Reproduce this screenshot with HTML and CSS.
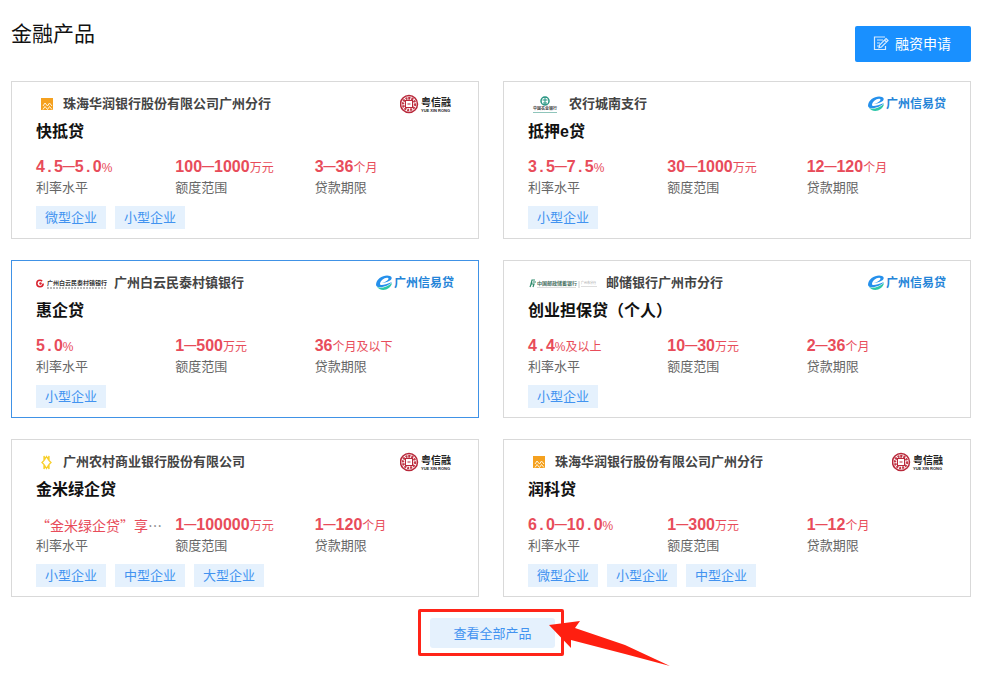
FILE: index.html
```html
<!DOCTYPE html>
<html lang="zh-CN">

<head>
    <meta charset="UTF-8">
    <meta name="viewport" content="width=device-width, initial-scale=1.0">
    <title>金融产品</title>
    <link rel="stylesheet" href="styles.css">
</head>

<body>
    <!-- Shared logos -->
    <svg class="sprite" aria-hidden="true">
        <symbol id="crbank" viewBox="0 0 21 22">
            <rect x="5" y="5" width="12" height="12" fill="#f5a11f" />
            <path d="M7 13l2-3 2.500 3 2-3 2.500 3M7 16.500l2-3 2.500 3 2-3 2.500 3" fill="none" stroke="#fff3da" />
        </symbol>
        <symbol id="yxr" viewBox="0 0 54 22">
            <circle cx="9" cy="11" r="8.500" fill="#fff" stroke="#b8283a" stroke-width="1.500" />
            <circle cx="9" cy="11" r="6" fill="none" stroke="#c23a49" stroke-width="2.500" stroke-dasharray="2 1" />
            <rect x="5.500" y="7.500" width="7" height="7" fill="#fff" stroke="#b8283a" />
            <path d="M5 7.500h8M9 4v3M7.500 11h3" stroke="#b8283a" />
            <text x="21" y="13" class="logo-brush">粤信融</text>
            <text x="21" y="19" class="logo-pinyin">YUE XIN RONG</text>
        </symbol>
        <symbol id="xyd" viewBox="0 0 78 22">
            <path d="M0 13C0 6 9 2 14 4c4 2 1 6-8 7 4-1 8-4 6-5-3-1-8 3-8 6 0 2 5 1 12-2-3 4-15 8-16 3z" fill="#2590ec" />
            <path d="M1 15c4 2 10 0 15-4-1 6-10 10-15 4z" fill="#2bc6a8" />
            <text x="18" y="15" class="logo-xyd">广州信易贷</text>
        </symbol>
    </svg>

    <div class="page">
        <header class="page-header">
            <h1>金融产品</h1>
            <button type="button" class="apply-button">
                <svg width="16" height="16" viewBox="0 0 16 16" fill="none" stroke="#d5eaff" stroke-width="1.200">
                    <path d="M12 2H1.500v12.500H12.500V11M4 5h6M4 8h3M4 11h2" />
                    <path d="M13 3.500l2 2-6.500 6.500-2.500.7.600-2.700zM11.500 5l2 2" />
                </svg>
                融资申请
            </button>
        </header>

        <main class="product-grid">
            <article class="card">
                <div class="bank">
                    <svg width="21" height="22"><use href="#crbank" /></svg>
                    <span class="bank-name">珠海华润银行股份有限公司广州分行</span>
                    <svg class="platform" width="54" height="22"><use href="#yxr" /></svg>
                </div>
                <h2>快抵贷</h2>
                <dl class="stats">
                    <div><dd><b>4<i class="dot">.</i>5<i class="dash">—</i>5<i class="dot">.</i>0</b>%</dd><dt>利率水平</dt></div>
                    <div><dd><b>100<i class="dash">—</i>1000</b>万元</dd><dt>额度范围</dt></div>
                    <div><dd><b>3<i class="dash">—</i>36</b>个月</dd><dt>贷款期限</dt></div>
                </dl>
                <div class="tags"><span>微型企业</span><span>小型企业</span></div>
            </article>

            <article class="card">
                <div class="bank">
                    <svg width="35" height="22" viewBox="0 0 35 22">
                        <circle cx="17" cy="8" r="4" fill="none" stroke="#279582" stroke-width="1.500" />
                        <path d="M17 4v8M14.500 7h5M15 10h4" stroke="#279582" />
                        <text x="5" y="17" class="logo-abc">中国农业银行</text>
                        <path d="M5 19.500h24" stroke="#8fc5bb" />
                    </svg>
                    <span class="bank-name">农行城南支行</span>
                    <svg class="platform" width="78" height="22"><use href="#xyd" /></svg>
                </div>
                <h2>抵押e贷</h2>
                <dl class="stats">
                    <div><dd><b>3<i class="dot">.</i>5<i class="dash">—</i>7<i class="dot">.</i>5</b>%</dd><dt>利率水平</dt></div>
                    <div><dd><b>30<i class="dash">—</i>1000</b>万元</dd><dt>额度范围</dt></div>
                    <div><dd><b>12<i class="dash">—</i>120</b>个月</dd><dt>贷款期限</dt></div>
                </dl>
                <div class="tags"><span>小型企业</span></div>
            </article>

            <article class="card active">
                <div class="bank">
                    <svg width="72" height="22" viewBox="0 0 72 22">
                        <circle cx="4" cy="11.500" r="3.200" fill="none" stroke="#d9212d" stroke-width="1.500" stroke-dasharray="17 3" />
                        <circle cx="4.500" cy="11.500" r="1.200" fill="#d9212d" />
                        <text x="11" y="13" class="logo-mintai">广州白云民泰村镇银行</text>
                        <path d="M11 16h60" stroke="#777" stroke-dasharray="2 1" />
                    </svg>
                    <span class="bank-name">广州白云民泰村镇银行</span>
                    <svg class="platform" width="78" height="22"><use href="#xyd" /></svg>
                </div>
                <h2>惠企贷</h2>
                <dl class="stats">
                    <div><dd><b>5<i class="dot">.</i>0</b>%</dd><dt>利率水平</dt></div>
                    <div><dd><b>1<i class="dash">—</i>500</b>万元</dd><dt>额度范围</dt></div>
                    <div><dd><b>36</b>个月及以下</dd><dt>贷款期限</dt></div>
                </dl>
                <div class="tags"><span>小型企业</span></div>
            </article>

            <article class="card">
                <div class="bank">
                    <svg width="72" height="22" viewBox="0 0 72 22">
                        <path d="M7 8H4L3 12h3l-1 3M2 15l2-5M5 10h3" fill="none" stroke="#2f8b6c" stroke-width="1.200" />
                        <text x="9" y="13" class="logo-psbc">中国邮政储蓄银行</text>
                        <path d="M9 15.500h39M53 14.500h16" stroke="#ddd" />
                        <path d="M51 9v7" stroke="#ccc" />
                        <text x="53" y="12" class="logo-branch">广州市分行</text>
                    </svg>
                    <span class="bank-name">邮储银行广州市分行</span>
                    <svg class="platform" width="78" height="22"><use href="#xyd" /></svg>
                </div>
                <h2>创业担保贷（个人）</h2>
                <dl class="stats">
                    <div><dd><b>4<i class="dot">.</i>4</b>%及以上</dd><dt>利率水平</dt></div>
                    <div><dd><b>10<i class="dash">—</i>30</b>万元</dd><dt>额度范围</dt></div>
                    <div><dd><b>2<i class="dash">—</i>36</b>个月</dd><dt>贷款期限</dt></div>
                </dl>
                <div class="tags"><span>小型企业</span></div>
            </article>

            <article class="card">
                <div class="bank">
                    <svg width="21" height="22" viewBox="0 0 21 22">
                        <path d="M8 5l1 3 1.500-2.500L12 8l1-3v4.500l2 2-2 2V18l-1-3-1.500 2.500L9 15l-1 3v-4.500l-2-2 2-2z" fill="none" stroke="#f8d02c" stroke-width="1.300" />
                    </svg>
                    <span class="bank-name">广州农村商业银行股份有限公司</span>
                    <svg class="platform" width="54" height="22"><use href="#yxr" /></svg>
                </div>
                <h2>金米绿企贷</h2>
                <dl class="stats">
                    <div><dd class="long">“金米绿企贷”享<span class="more">…</span></dd><dt>利率水平</dt></div>
                    <div><dd><b>1<i class="dash">—</i>100000</b>万元</dd><dt>额度范围</dt></div>
                    <div><dd><b>1<i class="dash">—</i>120</b>个月</dd><dt>贷款期限</dt></div>
                </dl>
                <div class="tags"><span>小型企业</span><span>中型企业</span><span>大型企业</span></div>
            </article>

            <article class="card">
                <div class="bank">
                    <svg width="21" height="22"><use href="#crbank" /></svg>
                    <span class="bank-name">珠海华润银行股份有限公司广州分行</span>
                    <svg class="platform" width="54" height="22"><use href="#yxr" /></svg>
                </div>
                <h2>润科贷</h2>
                <dl class="stats">
                    <div><dd><b>6<i class="dot">.</i>0<i class="dash">—</i>10<i class="dot">.</i>0</b>%</dd><dt>利率水平</dt></div>
                    <div><dd><b>1<i class="dash">—</i>300</b>万元</dd><dt>额度范围</dt></div>
                    <div><dd><b>1<i class="dash">—</i>12</b>个月</dd><dt>贷款期限</dt></div>
                </dl>
                <div class="tags"><span>微型企业</span><span>小型企业</span><span>中型企业</span></div>
            </article>
        </main>

        <footer class="more-row">
            <div class="highlight">
                <button type="button" class="all-button">查看全部产品</button>
                <svg class="arrow" width="124" height="50" viewBox="0 0 124 50">
                    <path d="M1 6L32 2l-5 7 50 17 45 21-45-12-54-14v8z" fill="#ff1f10" />
                </svg>
            </div>
        </footer>
    </div>
</body>

</html>
```
FILE: styles.css
```css
* {
    box-sizing: border-box;
}

body {
    margin: 0;
    background-color: #fff;
    color: #111;
    font-family: "Liberation Sans", "Noto Sans CJK SC", sans-serif;
}

h1,
h2,
dl,
dd,
dt {
    margin: 0;
}

button {
    border: none;
    font-family: inherit;
    cursor: pointer;
}

svg {
    flex: none;
}

.sprite {
    display: none;
}

.page {
    padding: 18px 11px;
}

/* Header */
.page-header {
    display: flex;
    justify-content: space-between;
    margin-bottom: 19px;
}

.page-header h1 {
    font-size: 21px;
    line-height: 32px;
    font-weight: 400;
}

.apply-button {
    display: flex;
    align-items: center;
    gap: 6px;
    height: 36px;
    margin-top: 8px;
    padding: 0 20px 2px 18px;
    border-radius: 2px;
    background-color: #1990ff;
    color: #fff;
    font-size: 14px;
}

/* Product cards */
.product-grid {
    display: grid;
    grid-template-columns: 1fr 1fr;
    gap: 21px 24px;
}

.card {
    padding: 11px 24px 9px;
    border: 1px solid #d9d9d9;
}

.card.active {
    border-color: #4092e6;
}

.bank {
    display: flex;
    align-items: center;
    gap: 6px;
    height: 22px;
}

.bank-name {
    color: #444;
    font-size: 13px;
    line-height: 22px;
    font-weight: 700;
    white-space: nowrap;
}

.platform {
    margin-left: auto;
}

.card h2 {
    margin-top: 5px;
    font-size: 16px;
    line-height: 24px;
}

.stats {
    display: grid;
    grid-template-columns: repeat(3, 1fr);
    margin-top: 12px;
}

.stats > div {
    display: flex;
    flex-direction: column;
}

.stats dd {
    height: 22px;
    color: #e84c5a;
    font-size: 12px;
    line-height: 22px;
    white-space: nowrap;
}

.stats b {
    font-size: 16px;
}

.stats dd.long {
    font-family: "Noto Sans CJK SC", sans-serif;
    font-size: 14px;
}

.more {
    color: #777;
}

.stats dt {
    color: #666;
    font-size: 13px;
    line-height: 20px;
}

/* Wide separators inside the figures */
.dot,
.dash {
    font-family: "Liberation Mono", monospace;
    font-style: normal;
    line-height: 1;
}

.dot {
    font-size: 15px;
}

.dash {
    font-size: 20px;
    font-weight: 400;
}

.tags {
    display: flex;
    gap: 9px;
    margin-top: 8px;
}

.tags span {
    padding: 0 9px;
    background-color: #e5f1fd;
    color: #4293f0;
    font-size: 13px;
    line-height: 23px;
}

/* View all */
.more-row {
    display: flex;
    justify-content: center;
    margin-top: 12px;
}

.highlight {
    position: relative;
    padding: 6px 6px 5px 9px;
    border: 3px solid #ff2418;
    border-radius: 2px;
}

.all-button {
    display: block;
    height: 30px;
    padding: 0 23px 2px;
    border-radius: 3px;
    background-color: #e5f1fd;
    color: #4293f0;
    font-size: 13px;
}

.arrow {
    position: absolute;
    top: 7px;
    left: 127px;
}

/* Logo lettering */
.logo-brush {
    font: 700 10px "Noto Sans CJK SC", sans-serif;
    fill: #222;
}

.logo-pinyin {
    font: 700 4px "Liberation Sans", sans-serif;
    fill: #222;
}

.logo-xyd {
    font: 700 12px "Noto Sans CJK SC", sans-serif;
    fill: #2484d8;
}

.logo-abc {
    font: 700 4px "Noto Sans CJK SC", sans-serif;
    fill: #444;
}

.logo-mintai {
    font: 700 6px "Noto Sans CJK SC", sans-serif;
    fill: #333;
}

.logo-psbc {
    font: 700 5px "Noto Sans CJK SC", sans-serif;
    fill: #47705f;
}

.logo-branch {
    font: 400 3px "Noto Sans CJK SC", sans-serif;
    fill: #999;
}
```
